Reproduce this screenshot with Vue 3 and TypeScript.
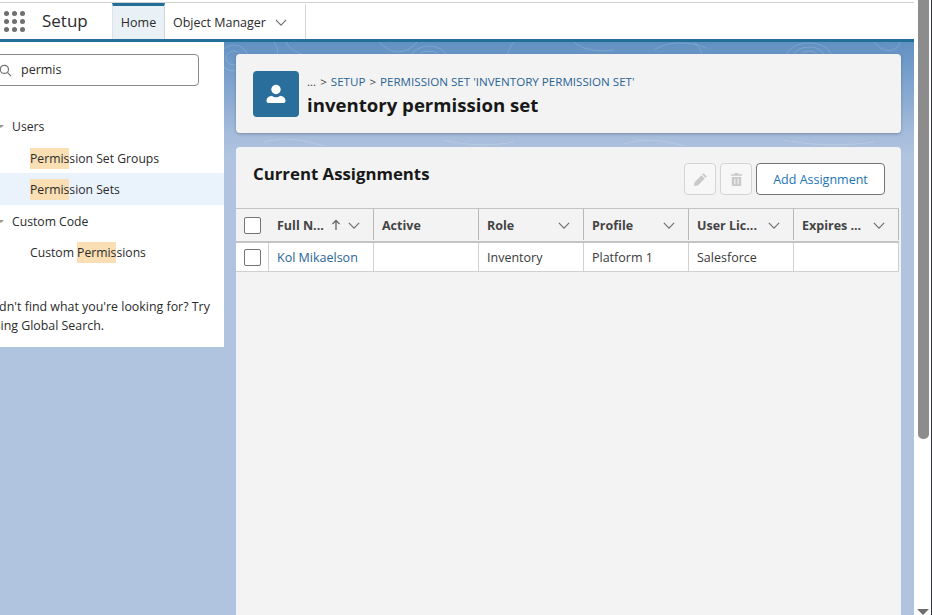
<script setup lang="ts">
interface Col { label: string; sort?: boolean; menu: boolean }
const cols: Col[] = [
  { label: 'Full N...', sort: true, menu: true },
  { label: 'Active', menu: false },
  { label: 'Role', menu: true },
  { label: 'Profile', menu: true },
  { label: 'User Lic...', menu: true },
  { label: 'Expires ...', menu: true },
]
const rowCells = ['', 'Inventory', 'Platform 1', 'Salesforce', '']
const dots = Array.from({ length: 9 }, (_, i) => i)
</script>

<template>
  <div class="screen">
    <div class="main">
      <header class="topbar">
        <div class="launcher"><i v-for="d in dots" :key="d" class="dot"></i></div>
        <div class="app-name">Setup</div>
        <nav class="tabs">
          <div class="tab active">Home</div>
          <div class="tab">Object Manager
            <svg class="chev chev-tab" viewBox="0 0 14 8"><path d="M1 1l6 6 6-6" /></svg>
          </div>
        </nav>
      </header>
      <div class="body">
        <svg class="swirls" viewBox="0 0 690 110" preserveAspectRatio="none">
          <g fill="none" stroke="#fff" stroke-opacity=".16">
            <ellipse cx="10" cy="16" rx="14" ry="13" /><ellipse cx="10" cy="16" rx="8" ry="7" />
            <path d="M50 0c3 5 5 9 3 12M62 0c6 12 20 14 34 14M155 0c4 3 10 10 18 10s16-4 20-10" />
            <ellipse cx="205" cy="16" rx="18" ry="12" /><ellipse cx="205" cy="16" rx="11" ry="7" /><ellipse cx="205" cy="16" rx="5" ry="3" />
            <path d="M290 0c-4 5-6 9-6 12M350 0c8 8 24 10 40 8M430 8c14-10 40-8 52-2" />
            <ellipse cx="585" cy="14" rx="22" ry="13" /><ellipse cx="585" cy="14" rx="15" ry="9" /><ellipse cx="585" cy="14" rx="8" ry="5" />
            <path d="M470 0c5 5 8 9 7 12M650 0c3 4 10 10 18 8 6-2 8-5 8-8" />
            <path d="M40 100c20-6 40-2 60 4M220 98c20 6 50 6 70 2M400 102c20-6 40-4 60 2M560 98c30 6 60 6 90 2" />
          </g>
        </svg>
        <aside class="sidebar">
          <div class="search">
            <svg class="search-icon" viewBox="0 0 14 14"><circle cx="5.8" cy="5.8" r="4.4" /><path d="M9 9l4 4" /></svg>
            <span>permis</span>
          </div>
          <div class="tree">
            <div class="group first"><i class="caret"></i>Users</div>
            <div class="leaf"><mark>Permis</mark>sion Set Groups</div>
            <div class="leaf selected"><mark>Permis</mark>sion Sets</div>
            <div class="group"><i class="caret"></i>Custom Code</div>
            <div class="leaf">Custom <mark>Permis</mark>sions</div>
          </div>
          <p class="hint">Didn't find what you're looking for? Try<br />using Global Search.</p>
        </aside>
        <div class="content">
          <section class="card page-head">
            <div class="avatar">
              <svg viewBox="0 0 24 24" width="24" height="24"><circle cx="12" cy="7.5" r="4.7" fill="#fff" /><path d="M2.500 19c0-3.600 3-5 5.500-5.300 1.100 1 2.500 1.500 4 1.500s2.900-.5 4-1.500c2.500.3 5.500 1.700 5.500 5.300 0 1.200-.8 2-2 2H4.500c-1.200 0-2-.8-2-2z" fill="#fff" /></svg>
            </div>
            <div class="head-text">
              <div class="crumbs">
                <span class="ellipsis">...</span><span class="sep">&gt;</span><a>SETUP</a><span class="sep">&gt;</span><a>PERMISSION SET 'INVENTORY PERMISSION SET'</a>
              </div>
              <h1>inventory permission set</h1>
            </div>
          </section>
          <section class="card assignments">
            <div class="card-head">
              <h2>Current Assignments</h2>
              <div class="actions">
                <button class="icon-btn">
                  <svg viewBox="0 0 16 16" width="15" height="15"><path d="M11.200 1.300l3.500 3.500-1.400 1.400-3.500-3.500zM9 3.500l3.500 3.500-7.300 7.300-4.200.7.700-4.200z" fill="#c9c9c9" /></svg>
                </button>
                <button class="icon-btn">
                  <svg viewBox="0 0 16 16" width="15" height="15"><path d="M6 1h4v1.500h4V4H2V2.500h4zM3 5.300h10v8.200c0 .8-.6 1.500-1.500 1.500h-7C3.600 15 3 14.300 3 13.500zM5.700 7v6h1.100V7zm3.500 0v6h1.100V7z" fill="#c9c9c9" fill-rule="evenodd" /></svg>
                </button>
                <button class="add-btn">Add Assignment</button>
              </div>
            </div>
            <div class="table">
              <div class="th check-cell"><i class="box"></i></div>
              <div v-for="c in cols" :key="c.label" class="th">
                <span class="th-label">{{ c.label }}</span>
                <svg v-if="c.sort" class="arrow" viewBox="0 0 10 12"><path d="M5 11V2M1.500 5L5 1.500 8.500 5" /></svg>
                <svg v-if="c.menu" class="chev" viewBox="0 0 14 8"><path d="M1 1l6 6 6-6" /></svg>
              </div>
              <div class="td check-cell"><i class="box"></i></div>
              <div class="td"><a>Kol Mikaelson</a></div>
              <div v-for="(v, i) in rowCells" :key="i" class="td">{{ v }}</div>
            </div>
          </section>
        </div>
      </div>
    </div>
    <div class="scrollbar">
      <div class="thumb"></div>
      <i class="down"></i>
    </div>
  </div>
</template>

<style>
html, body { margin: 0; overflow: hidden; }
</style>

<style scoped>
.screen {
  width: 932px; height: 615px; display: flex; overflow: hidden; background: #fff;
  font-family: "Open Sans", "Noto Sans", sans-serif; font-size: 12.5px; color: #181818;
}
.main { width: 914px; display: flex; flex-direction: column; flex: none; }
.topbar {
  height: 36px; flex: none; display: flex; align-items: stretch; background: #fff;
  border-top: 1px solid #d0d0d0; margin-top: 2px; border-bottom: 3px solid #246f98;
}
.launcher {
  display: grid; grid-template-columns: repeat(3, 5px); gap: 3px; align-content: center;
  margin-left: 4px; width: 21px; height: 24px; align-self: center;
}
.dot { width: 5px; height: 5px; border-radius: 50%; background: #6e6e6e; }
.app-name { margin-left: 17px; width: 70px; font-size: 17px; line-height: 36px; color: #2b2b2b; }
.tabs { display: flex; }
.tab {
  display: flex; align-items: center; gap: 9px; padding: 0 8px; border-right: 1px solid #d4d4d4;
  border-top: 3px solid transparent; height: 36px; box-sizing: border-box; white-space: nowrap; color: #2b2b2b;
}
.tab.active { background: #eaf1f6; border-top-color: #246f98; border-left: 1px solid #dde3e8; width: 53px; justify-content: center; padding: 0; }
.tab:not(.active) { width: 141px; padding-right: 0; }
.chev { width: 12px; height: 7px; fill: none; stroke: #6f6f6f; stroke-width: 1.400; flex: none; }
.body {
  position: relative; flex: 1; display: flex; align-items: flex-start; min-height: 0;
  background: linear-gradient(180deg, #6090c2 0, #a4bbdb 90px, #b0c4df 115px);
}
.swirls { position: absolute; left: 224px; top: 0; width: 690px; height: 110px; pointer-events: none; }
.sidebar {
  position: relative; width: 224px; height: 305px; flex: none; background: #fff; overflow: hidden;
  display: flex; flex-direction: column; font-size: 12.2px;
}
.search {
  display: flex; align-items: center; gap: 9px; box-sizing: border-box; height: 32px; width: 209px;
  margin: 12px 0 0 -10px; padding-left: 8px; border: 1px solid #8a8a8a; border-radius: 4px; background: #fff; font-size: 12.5px;
}
.search span { color: #2b2b2b; margin-top: -1px; }
.search-icon { width: 13px; height: 13px; fill: none; stroke: #707070; stroke-width: 1.300; flex: none; }
.tree { margin-top: 24px; }
.group { height: 32px; display: flex; align-items: center; padding-left: 12px; position: relative; color: #2b2b2b; }
.group.first { margin-bottom: 1px; }
.caret {
  position: absolute; left: -2px; top: 15px; width: 0; height: 0;
  border-left: 3px solid transparent; border-right: 3px solid transparent; border-top: 3px solid #999;
}
.leaf { height: 31px; line-height: 31px; padding-left: 30px; color: #2b2b2b; }
.leaf.selected { background: #eaf3fc; box-shadow: 0 -1px 0 #eaf3fc; }
mark { background: #f9dfb3; color: inherit; padding: 2px 0; }
.hint { margin: 29px 0 0 -13px; font-size: 12.4px; line-height: 19px; color: #2b2b2b; white-space: nowrap; }
.content {
  position: relative; width: 665px; margin-left: 12px; padding-top: 12px; display: flex;
  flex-direction: column; gap: 14px; flex: none;
}
.card { background: #f3f3f3; border-radius: 4px; }
.page-head { height: 79px; display: flex; align-items: center; padding-left: 17px; box-sizing: border-box; gap: 8px; box-shadow: 0 1px 3px rgba(60, 70, 90, .4); }
.avatar {
  width: 46px; height: 46px; border-radius: 4px; background: #2a6f9c; display: flex;
  align-items: center; justify-content: center;
}
.head-text { padding-top: 3px; }
.crumbs { display: flex; gap: 4px; font-size: 11.6px; line-height: 16px; color: #444; white-space: nowrap; }
.crumbs a { color: #2a6496; }
h1 { margin: 2px 0 0; font-size: 18.6px; font-weight: 700; line-height: 25px; color: #181818; }
.assignments { height: 500px; display: flex; flex-direction: column; border-radius: 4px 4px 0 0; }
.card-head { height: 61px; display: flex; justify-content: space-between; padding: 0 16px 0 17px; flex: none; }
h2 { margin: 15px 0 0; font-size: 16.8px; font-weight: 700; line-height: 24px; color: #181818; }
.actions { display: flex; gap: 4px; margin-top: 16px; height: 32px; }
.icon-btn {
  width: 32px; height: 32px; padding: 0; display: flex; align-items: center; justify-content: center;
  background: #f7f7f7; border: 1px solid #d4d4d4; border-radius: 4px;
}
.add-btn {
  width: 129px; height: 32px; padding: 0; background: #fff; border: 1px solid #747474; border-radius: 4px;
  font: inherit; color: #1b74b4;
}
.table { display: grid; grid-template-columns: 33px repeat(6, 105px); width: 663px; }
.th {
  height: 35px; box-sizing: border-box; display: flex; align-items: center; padding: 0 14px 0 8px;
  background: #f3f3f3; border-top: 1px solid #c4c4c4; border-bottom: 2px solid #c4c4c4; position: relative;
  font-weight: 700; color: #444;
}
.th::after { content: ""; position: absolute; right: 0; top: 0; bottom: 1px; width: 1px; background: #b8b8b8; }
.th:first-child::after { display: none; }
.th-label { flex: 1; white-space: nowrap; }
.arrow { width: 10px; height: 12px; fill: none; stroke: #666; stroke-width: 1.300; margin-right: 7px; flex: none; }
.td {
  height: 29px; box-sizing: border-box; display: flex; align-items: center; padding: 0 8px; background: #fff;
  border-bottom: 1px solid #d0d0d0; border-right: 1px solid #d0d0d0; color: #3a3a3a;
}
.td a { color: #2a6496; white-space: nowrap; }
.check-cell { padding: 0; justify-content: center; }
.box { width: 15px; height: 15px; border: 1px solid #747474; border-radius: 2px; background: #fff; }
.scrollbar { position: relative; width: 18px; flex: none; background: #fff; border-right: 1px solid #2b3445; box-sizing: border-box; }
.thumb { margin-left: 4px; width: 11px; height: 439px; background: #8c8c8c; border-radius: 0 0 5px 5px; }
.down {
  position: absolute; left: 3px; bottom: 0; width: 0; height: 0;
  border-left: 6px solid transparent; border-right: 6px solid transparent; border-top: 6px solid #6e6e6e;
}
</style>
